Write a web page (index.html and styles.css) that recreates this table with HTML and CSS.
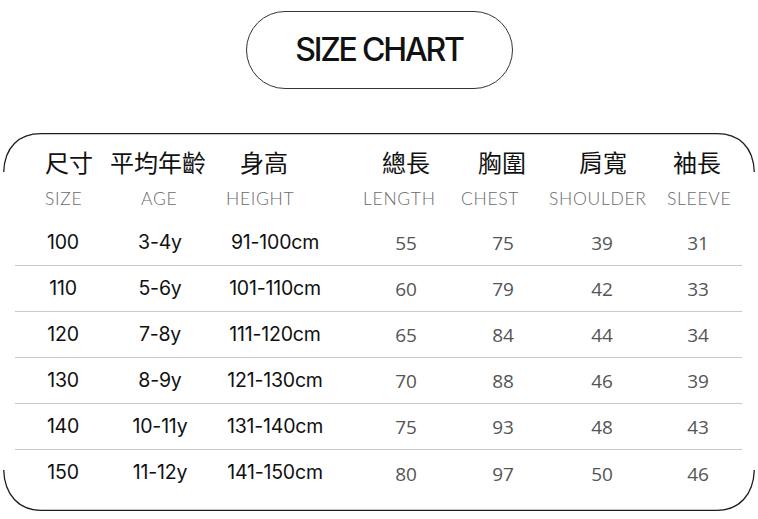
FILE: index.html
```html
<!DOCTYPE html>
<html lang="zh-Hant">
<head>
<meta charset="utf-8">
<title>Size Chart</title>
<link rel="stylesheet" href="styles.css">
</head>
<body>
<div class="page">
  <div class="title-pill"><h1 class="title">SIZE CHART</h1></div>
  <div class="chart">
    <svg class="frame" width="752" height="380" viewBox="0 0 752 380" aria-hidden="true">
      <path d="M0.7 39 C1.5 14 16 0.7 38 0.7 H714 C736 0.7 750.5 14 751.3 39" fill="none" stroke="#1d1d1d" stroke-width="1.3"/>
      <path d="M0.7 337 C1.5 362 16 377.3 38 377.3 H714 C736 377.3 750.5 362 751.3 337" fill="none" stroke="#1d1d1d" stroke-width="1.3"/>
    </svg>
    <div class="table">
      <div class="row head-zh">
        <span>尺寸</span><span>平均年齡</span><span>身高</span><span>總長</span><span>胸圍</span><span>肩寬</span><span>袖長</span>
      </div>
      <div class="row head-en">
        <span>SIZE</span><span>AGE</span><span>HEIGHT</span><span>LENGTH</span><span>CHEST</span><span>SHOULDER</span><span>SLEEVE</span>
      </div>
      <div class="rows">
        <div class="row data"><span class="k">100</span><span class="k">3-4y</span><span class="k">91-100cm</span><span class="v">55</span><span class="v">75</span><span class="v">39</span><span class="v">31</span></div>
        <div class="row data"><span class="k">110</span><span class="k">5-6y</span><span class="k">101-110cm</span><span class="v">60</span><span class="v">79</span><span class="v">42</span><span class="v">33</span></div>
        <div class="row data"><span class="k">120</span><span class="k">7-8y</span><span class="k">111-120cm</span><span class="v">65</span><span class="v">84</span><span class="v">44</span><span class="v">34</span></div>
        <div class="row data"><span class="k">130</span><span class="k">8-9y</span><span class="k">121-130cm</span><span class="v">70</span><span class="v">88</span><span class="v">46</span><span class="v">39</span></div>
        <div class="row data"><span class="k">140</span><span class="k">10-11y</span><span class="k">131-140cm</span><span class="v">75</span><span class="v">93</span><span class="v">48</span><span class="v">43</span></div>
        <div class="row data"><span class="k">150</span><span class="k">11-12y</span><span class="k">141-150cm</span><span class="v">80</span><span class="v">97</span><span class="v">50</span><span class="v">46</span></div>
      </div>
    </div>
  </div>
</div>
</body>
</html>
```
FILE: styles.css
```css
* { box-sizing: border-box; }
html, body { margin: 0; padding: 0; background: #fff; }
body {
  width: 758px;
  height: 519px;
  overflow: hidden;
  font-family: Inter, "Liberation Sans", sans-serif;
  color: #111;
}
.page { display: flex; flex-direction: column; align-items: center; }

.title-pill {
  margin-top: 11px;
  width: 267px;
  height: 78px;
  border: 1.3px solid #333;
  border-radius: 39px;
  display: flex;
  align-items: center;
  justify-content: center;
}
.title {
  margin: 0;
  font-family: Inter, "Liberation Sans", sans-serif;
  font-weight: 500;
  font-size: 32px;
  letter-spacing: -2.2px;
  color: #111;
  line-height: 1;
}

.chart {
  position: relative;
  margin-top: 44px;
  width: 752px;
  height: 380px;
  align-self: flex-start;
  margin-left: 3px;
}
.frame { position: absolute; left: 0; top: 0; pointer-events: none; }

.table {
  padding: 11px 13px 0 12px;
  display: flex;
  flex-direction: column;
}
.row { display: grid; align-items: center; white-space: nowrap; }

.head-zh {
  height: 36px;
  padding-left: 30px;
  grid-template-columns: 65px 130px 142px 96px 101px 94px auto;
  font-family: "Noto Sans CJK TC", "Noto Sans CJK SC", sans-serif;
  font-size: 24px;
  color: #111;
  line-height: 1;
}
.head-en {
  height: 38px;
  padding-left: 30px;
  grid-template-columns: 96px 85px 137px 98px 88px 118px auto;
  font-family: Lato, "Open Sans", sans-serif;
  font-weight: 300;
  font-size: 17.5px;
  letter-spacing: 0.7px;
  color: #6a6a6a;
  line-height: 1;
}
.rows { margin-top: 2px; display: flex; flex-direction: column; }
.data {
  height: 46px;
  grid-template-columns: 96px 98px 132px 130px 64px 134px 58px;
  border-bottom: 1px solid #c9c9c9;
}
.data:last-child { border-bottom: none; }
.data span { justify-self: center; line-height: 1; }
.data .k {
  font-family: Inter, "Liberation Sans", sans-serif;
  font-size: 19.5px;
  color: #111;
  letter-spacing: -0.2px;
}
.data .v {
  font-family: "Open Sans", "Noto Sans", sans-serif;
  font-size: 19px;
  color: #555;
  padding-top: 2px;
}
```
